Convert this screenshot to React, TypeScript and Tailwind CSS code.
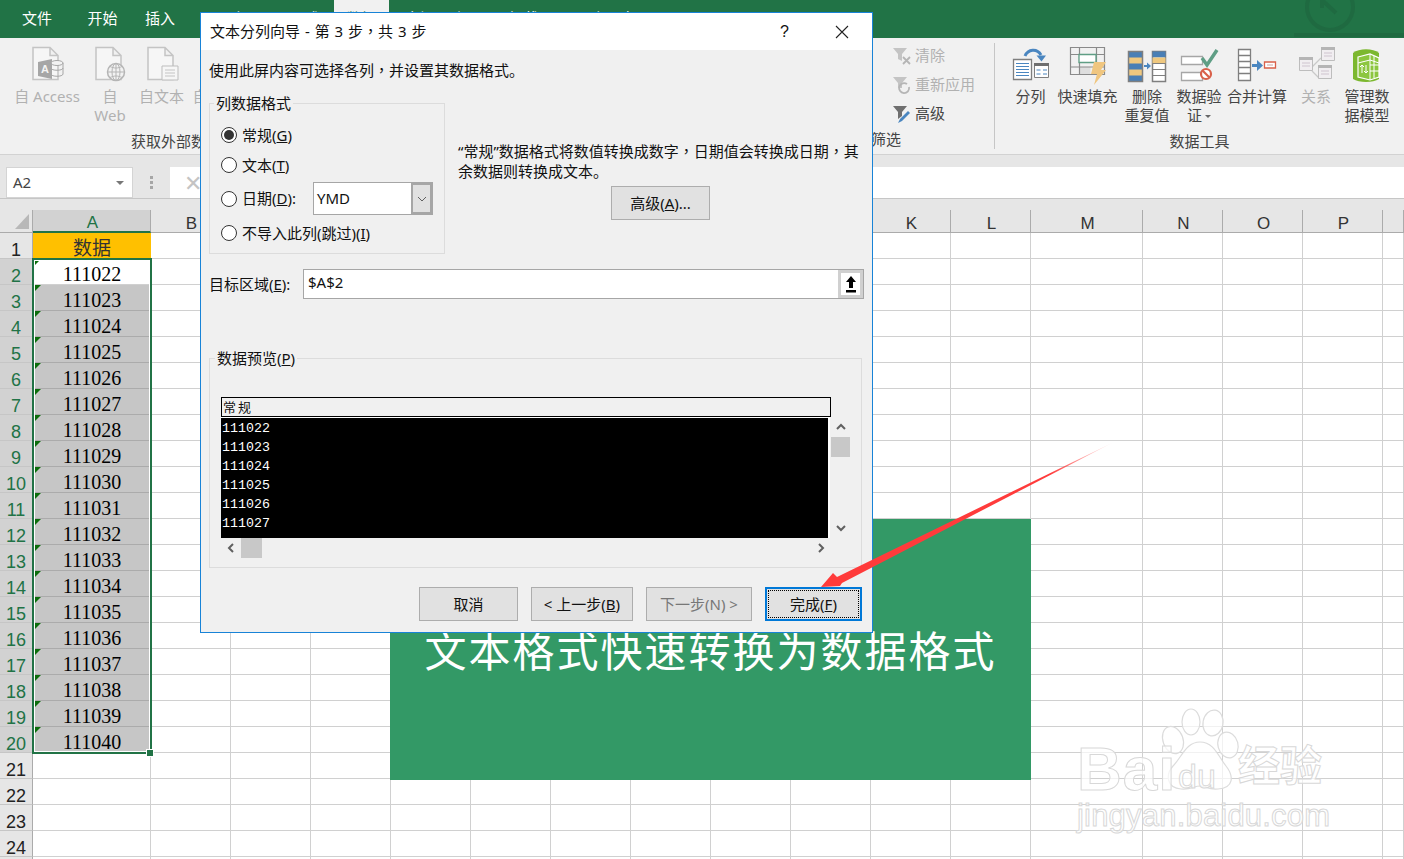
import type { ReactNode } from "react";

const columns = ["A", "B", "C", "D", "E", "F", "G", "H", "I", "J", "K", "L", "M", "N", "O", "P", ""];
const rows = Array.from({ length: 25 }, (_, i) => i + 1);
const tabs = [
  { label: "文件", w: "w-[74px]" },
  { label: "开始", w: "w-[57px]" },
  { label: "插入", w: "w-[58px]" },
  { label: "页面布局", w: "w-[86px]" },
  { label: "公式", w: "w-[59px]" },
  { label: "数据", w: "w-[55px]", active: true },
  { label: "审阅", w: "w-[62px]" },
  { label: "视图", w: "w-[40px]" },
  { label: "加载项", w: "w-[80px]" },
  { label: "百度网盘", w: "w-[69px]" },
];
const previewRows = ["111022", "111023", "111024", "111025", "111026", "111027"];

const Svg = ({ children }: { children: ReactNode }) => (
  <svg width="40" height="40" viewBox="0 0 40 40" fill="none" className="shrink-0">
    {children}
  </svg>
);

const PageShape = () => <path d="M6 2.500h17l8 8v24H6z M23 2.500v8h8" stroke="#c4c4c4" strokeWidth="1.500" fill="#f6f6f6" />;

const AccessIcon = () => (
  <Svg>
    <PageShape />
    <path d="M11 17l14-3v20l-14-3z" fill="#a6a6a6" />
    <text x="14" y="28" fontSize="11" fontWeight="700" fill="#f4f4f4" fontFamily="Liberation Sans">A</text>
    <ellipse cx="30" cy="18" rx="6" ry="2.500" fill="#f2f2f2" stroke="#a6a6a6" />
    <path d="M24 18v11c0 3 12 3 12 0V18M24 23c0 3 12 3 12 0" fill="none" stroke="#a6a6a6" />
  </Svg>
);
const WebIcon = () => (
  <Svg>
    <PageShape />
    <circle cx="26" cy="27" r="8.500" fill="#f2f2f2" stroke="#b5b5b5" strokeWidth="1.500" />
    <path d="M17.500 27h17M26 18.500v17M20 21.500c4 2 8 2 12 0M20 32.500c4-2 8-2 12 0" stroke="#b5b5b5" />
    <ellipse cx="26" cy="27" rx="4" ry="8.500" stroke="#b5b5b5" />
  </Svg>
);
const TextIcon = () => (
  <Svg>
    <PageShape />
    <path d="M20 21h16v14H20z" fill="#f6f6f6" stroke="#bdbdbd" />
    <path d="M23 25h10M23 28h10M23 31h10" stroke="#c4c4c4" />
  </Svg>
);
const SplitIcon = () => (
  <Svg>
    <path d="M2.500 14.500h18v20h-18z" fill="#fff" stroke="#7f7f7f" strokeWidth="1.300" />
    <path d="M5 18.500h13M5 21.500h13M5 24.500h13M5 27.500h13M5 30.500h13" stroke="#4a86c0" />
    <path d="M23.500 18.500h14v14h-14z" fill="#fff" stroke="#7f7f7f" />
    <path d="M23 18h15v3H23z" fill="#6f6f6f" />
    <path d="M25.500 25h4M32 25h4M25.500 29h4M32 29h4" stroke="#4a86c0" />
    <path d="M14 11c3-7 12-8 16-1" stroke="#4a86c0" strokeWidth="3" />
    <path d="M25.500 10.500h9.500l-4.500 6z" fill="#4a86c0" />
  </Svg>
);
const FlashFillIcon = () => (
  <Svg>
    <path d="M11.500 22h11v7h-11z" fill="#dedede" />
    <path d="M2.500 2.500h34v27h-34zM2.500 9.500h34M2.500 22h34M11.500 2.500v27M28.500 2.500v27" stroke="#8a8a8a" strokeWidth="1.200" fill="none" />
    <path d="M11 9.500h17v8H11z" fill="#fff" stroke="#5f9e85" strokeWidth="1.300" />
    <path d="M26 17h12l-5 8h5L26 40l3-11h-6z" fill="#f0c67f" />
  </Svg>
);
const DuplicatesIcon = () => (
  <Svg>
    <path d="M1.500 6.500h14v30h-14z" fill="#4a7fb5" />
    <path d="M1.500 12.500h14v6h-14zM1.500 24.500h14v6h-14z" fill="#efc87f" />
    <path d="M1.500 6.500h14v30h-14z" stroke="#7f7f7f" strokeWidth="1.500" />
    <path d="M17 21h4" stroke="#4a86c0" strokeWidth="2" />
    <path d="M20 17.500l4 3.500-4 3.500z" fill="#4a86c0" />
    <path d="M25.500 6.500h13v30h-13z" fill="#fff" stroke="#7f7f7f" strokeWidth="1.500" />
    <path d="M25.500 6.500h13v6h-13z" fill="#4a7fb5" />
    <path d="M25.500 12.500h13v6h-13z" fill="#efc87f" />
    <path d="M25.500 18.500h13M25.500 24.500h13M25.500 30.500h13" stroke="#7f7f7f" />
  </Svg>
);
const ValidationIcon = () => (
  <Svg>
    <path d="M2.500 11.500h21v8h-21zM2.500 27.500h21v8h-21z" fill="#fff" stroke="#a6a6a6" strokeWidth="1.300" />
    <path d="M23 13l5 7L38 5" stroke="#5f9e85" strokeWidth="3.500" />
    <circle cx="27" cy="29" r="5" fill="#fff" stroke="#d9604a" strokeWidth="2.200" />
    <path d="M23.500 25.500l7 7" stroke="#d9604a" strokeWidth="2.200" />
  </Svg>
);
const ConsolidateIcon = () => (
  <Svg>
    <path d="M1.500 4.500h12v31h-12zM1.500 10.500h12M1.500 16.500h12M1.500 22.500h12M1.500 28.500h12" fill="#fff" stroke="#7f7f7f" strokeWidth="1.300" />
    <path d="M15 20.500h7" stroke="#4a86c0" strokeWidth="3" />
    <path d="M20 15l6 5.500-6 5.500z" fill="#4a86c0" />
    <path d="M27.500 17h11v6h-11z" fill="#fff" stroke="#d9604a" strokeWidth="1.300" />
    <path d="M30 20h6" stroke="#c8a0a0" />
  </Svg>
);
const RelationshipIcon = () => (
  <Svg>
    <path d="M16 22l9-9M16 26l7 7" stroke="#c9c9c9" strokeWidth="1.300" />
    <path d="M3.500 12.500h13v13h-13zM25.500 2.500h13v13h-13zM22.500 20.500h13v13h-13z" fill="#f1eef1" stroke="#bdbdbd" />
    <path d="M3 12h14v3H3zM25 2h14v3H25zM22 20h14v3H22z" fill="#b5b5b5" />
    <path d="M6 18h8M6 21h8M28 8h8M28 11h8M25 26h8M25 29h8" stroke="#cfc4cf" />
  </Svg>
);
const DataModelIcon = () => (
  <Svg>
    <path d="M6 8c6-5 20-5 26 0v26c-6 4-20 4-26 0z" fill="#7cb82f" />
    <path d="M11 12l12-3 9 4v19l-9 3-12-3z" fill="#8cc63f" stroke="#fff" strokeWidth="1.200" />
    <path d="M23 9v26M11 18l12-3 9 3M27 11v22M32 20h-9M32 26h-9" stroke="#fff" />
    <path d="M15 28v-8M15 20l-2 2M15 20l2 2M19 20v8M19 28l-2-2M19 28l2-2" stroke="#fff" />
  </Svg>
);

const RibbonButton = ({ icon, lines, w, disabled, caret }: { icon: ReactNode; lines: string[]; w: string; disabled?: boolean; caret?: boolean }) => (
  <div className={`${w} flex shrink-0 flex-col items-center pt-[7px]`}>
    {icon}
    <div className={`mt-[2px] whitespace-nowrap text-center text-[15px] leading-[19px] ${disabled ? "text-[#b1b1b1]" : "text-[#444444]"}`}>
      {lines.map((l, i) => (
        <div key={i}>
          {l}
          {caret && i === lines.length - 1 && <span className="ml-[3px] inline-block border-x-[3px] border-t-[3px] border-x-transparent border-t-[#666666] align-middle" />}
        </div>
      ))}
    </div>
  </div>
);

const GroupLabel = ({ children, className = "" }: { children: ReactNode; className?: string }) => (
  <div className={`flex h-[24px] items-center pb-[2px] text-[15px] text-[#444444] ${className}`}>{children}</div>
);

const FilterRow = ({ icon, label, disabled }: { icon: ReactNode; label: string; disabled?: boolean }) => (
  <div className={`flex h-[29px] items-center gap-[3px] text-[15px] ${disabled ? "text-[#b1b1b1]" : "text-[#444444]"}`}>
    <svg width="20" height="22" viewBox="0 0 20 22" fill="none">
      {icon}
    </svg>
    {label}
  </div>
);

const Ribbon = () => (
  <div className="flex h-[116px] bg-[#f1f1f1]">
    <div className="flex w-[352px] shrink-0 flex-col">
      <div className="flex h-[92px] pl-[7px]">
        <RibbonButton icon={<AccessIcon />} lines={["自 Access"]} w="w-[80px]" disabled />
        <RibbonButton icon={<WebIcon />} lines={["自", "Web"]} w="w-[46px]" disabled />
        <RibbonButton icon={<TextIcon />} lines={["自文本"]} w="w-[57px]" disabled />
        <RibbonButton icon={<TextIcon />} lines={["自其他来源"]} w="w-[80px]" disabled />
      </div>
      <GroupLabel className="justify-center">获取外部数据</GroupLabel>
    </div>
    <div className="my-[5px] flex w-[643px] shrink-0 flex-col border-r border-[#c6c6c6]">
      <div className="flex h-[87px] justify-end">
        <div className="-mt-[2px] flex w-[102px] flex-col">
          <FilterRow
            disabled
            label="清除"
            icon={
              <>
                <path d="M1 3h14l-5 6v7l-4-2V9z" fill="#c4c4c4" />
                <path d="M11 12l7 7M18 12l-7 7" stroke="#b5b5b5" strokeWidth="1.800" />
              </>
            }
          />
          <FilterRow
            disabled
            label="重新应用"
            icon={
              <>
                <path d="M1 3h14l-5 6v5H6V9z" fill="#c4c4c4" />
                <path d="M17 13a5 5 0 1 1-2-3" stroke="#b5b5b5" strokeWidth="1.800" />
              </>
            }
          />
          <FilterRow
            label="高级"
            icon={
              <>
                <path d="M1 3h14l-5 6v4l-4 3V9z" fill="#6f6f6f" />
                <path d="M6 20l2-4 8-8 2 2-8 8z" fill="#4a86c0" />
              </>
            }
          />
        </div>
      </div>
      <GroupLabel className="justify-end pr-[93px]">排序和筛选</GroupLabel>
    </div>
    <div className="flex flex-1 flex-col">
      <div className="flex h-[92px] pl-[12px]">
        <RibbonButton icon={<SplitIcon />} lines={["分列"]} w="w-[47px]" />
        <RibbonButton icon={<FlashFillIcon />} lines={["快速填充"]} w="w-[67px]" />
        <RibbonButton icon={<DuplicatesIcon />} lines={["删除", "重复值"]} w="w-[52px]" />
        <RibbonButton icon={<ValidationIcon />} lines={["数据验", "证"]} w="w-[52px]" caret />
        <RibbonButton icon={<ConsolidateIcon />} lines={["合并计算"]} w="w-[64px]" />
        <RibbonButton icon={<RelationshipIcon />} lines={["关系"]} w="w-[54px]" disabled />
        <RibbonButton icon={<DataModelIcon />} lines={["管理数", "据模型"]} w="w-[48px]" />
      </div>
      <GroupLabel className="justify-center">数据工具</GroupLabel>
    </div>
  </div>
);

const FormulaBar = () => (
  <div className="flex h-[56px] flex-col border-t border-[#d2d2d2] bg-[#e6e6e6]">
    <div className="mt-[12px] flex h-[32px] items-stretch border-b border-[#c6c6c6]">
      <div className="ml-[6px] flex w-[127px] items-center justify-between border border-[#d4d4d4] bg-white pl-[6px] pr-[8px] text-[15px] text-[#444444]">
        A2
        <span className="border-x-[4px] border-t-[4px] border-x-transparent border-t-[#777777]" />
      </div>
      <div className="flex w-[37px] flex-col items-center justify-center gap-[2px]">
        <span className="size-[3px] bg-[#a6a6a6]" />
        <span className="size-[3px] bg-[#a6a6a6]" />
        <span className="size-[3px] bg-[#a6a6a6]" />
      </div>
      <div className="flex flex-1 items-center bg-white pl-[14px] text-[22px] text-[#c4c4c4]">✕</div>
    </div>
  </div>
);

const Sheet = () => (
  <div className="relative grid grid-cols-[33px_118px_repeat(11,80px)_112px_repeat(3,80px)_1fr] grid-rows-[23px_repeat(25,26px)] bg-white font-['Liberation_Serif','Noto_Sans_CJK_SC',serif] text-[20px] text-black">
    <div className="flex items-center justify-end border-r border-b border-[#ababab] bg-[#e6e6e6] pr-[3px]">
      <svg width="14" height="15" viewBox="0 0 14 15">
        <path d="M14 0v15H0z" fill="#b8b8b8" />
      </svg>
    </div>
    {columns.map((c) => (
      <div
        key={c || "end"}
        className={
          c === "A"
            ? "flex items-center justify-center border-b-2 border-r border-b-[#217346] border-r-[#ababab] bg-[#d2d2d2] pl-[2px] pt-[5px] font-['Liberation_Sans'] text-[17px] text-[#217346]"
            : "flex items-center justify-center border-r border-b border-[#ababab] bg-[#e6e6e6] pl-[2px] pt-[6px] font-['Liberation_Sans'] text-[17px] text-[#333333]"
        }
      >
        {c}
      </div>
    ))}
    {rows.map((r) => {
      const selected = r >= 2 && r <= 20;
      return [
        <div
          key={`h${r}`}
          className={`flex items-center justify-center border-r border-b border-r-[#ababab] border-b-[#c6c6c6] pt-[10px] font-['Liberation_Sans'] text-[18px] ${
            selected ? "bg-[#d2d2d2] text-[#217346]" : "bg-[#e6e6e6] text-[#222222]"
          }`}
        >
          {r <= 24 ? r : ""}
        </div>,
        ...columns.map((c) => {
          if (c === "A" && r === 1)
            return (
              <div key={`${c}${r}`} className="flex items-center justify-center bg-[#ffc000] pt-[3px] font-['Noto_Sans_CJK_SC'] text-[19px] text-[#333333]">
                数据
              </div>
            );
          if (c === "A" && selected)
            return (
              <div
                key={`${c}${r}`}
                className={`relative flex items-center justify-center border-b pt-[4px] ${r === 2 ? "border-[#d0d0d0] bg-white" : "border-[#ababab] bg-[#c6c6c6]"}`}
              >
                <span className="absolute left-[2px] top-0 size-[6px] bg-[#0b6e0b] [clip-path:polygon(0_0,100%_0,0_100%)]" />
                {111020 + r}
              </div>
            );
          return <div key={`${c}${r}`} className="border-r border-b border-[#d0d0d0]" />;
        }),
      ];
    })}
    {/* selection border A2:A20 */}
    <div className="absolute left-[32px] top-[48px] h-[496px] w-[120px] border-2 border-[#217346] shadow-[inset_0_0_0_1px_white]" />
    <div className="absolute left-[147px] top-[540px] size-[6px] bg-[#217346] outline outline-1 outline-white" />
  </div>
);

const Radio = ({ checked }: { checked?: boolean }) => (
  <span className="flex size-[16px] shrink-0 items-center justify-center rounded-full border border-[#333333] bg-white">
    {checked && <span className="size-[10px] rounded-full bg-[#333333]" />}
  </span>
);

const RadioRow = ({ checked, className, children }: { checked?: boolean; className: string; children: ReactNode }) => (
  <div className={`flex items-center gap-[5px] ${className}`}>
    <Radio checked={checked} />
    {children}
  </div>
);

const Button = ({ className, children }: { className: string; children: ReactNode }) => (
  <div className={`flex h-[34px] items-center justify-center border border-[#adadad] bg-[#e1e1e1] ${className}`}>{children}</div>
);

const Chevron = ({ d }: { d: string }) => (
  <svg width="12" height="12" viewBox="0 0 12 12" fill="none">
    <path d={d} stroke="#606060" strokeWidth="2" />
  </svg>
);

const Comma = () => <span className="font-['Noto_Sans_CJK_TC']">，</span>;

const Dialog = () => (
  <div className="absolute left-[200px] top-[12px] flex h-[621px] w-[673px] flex-col border border-[#1883d7] bg-[#f0f0f0] text-[15px] text-[#111111]">
    <div className="flex h-[37px] shrink-0 items-center bg-white pl-[9px]">
      <span className="flex-1 [word-spacing:1px]">
        文本分列向导 - 第 3 步<Comma />共 3 步
      </span>
      <span className="mr-[46px] font-['Liberation_Sans'] text-[16px]">?</span>
      <svg width="14" height="14" viewBox="0 0 14 14" className="mr-[23px]">
        <path d="M1 1l12 12M13 1L1 13" stroke="#222222" strokeWidth="1.100" />
      </svg>
    </div>
    <div className="px-[8px]">
      <div className="mt-[9px] h-[22px] leading-[22px]">
        使用此屏内容可选择各列<Comma />并设置其数据格式。
      </div>
      <div className="mt-[22px] flex">
        <div className="relative h-[151px] w-[236px] shrink-0 border border-[#dcdcdc] pl-[11px] pt-[16px]">
          <span className="absolute left-[4px] top-[-11px] bg-[#f0f0f0] px-[2px] leading-[20px]">列数据格式</span>
          <RadioRow checked className="h-[30px]">
            <span>
              常规(<u>G</u>)
            </span>
          </RadioRow>
          <RadioRow className="h-[30px]">
            <span>
              文本(<u>T</u>)
            </span>
          </RadioRow>
          <RadioRow className="mt-[2px] h-[33px]">
            <span className="w-[66px] whitespace-nowrap">
              日期(<u>D</u>):
            </span>
            <div className="flex h-[33px] w-[120px] border border-[#a6a6a6] bg-white">
              <span className="flex flex-1 items-center pl-[3px]">YMD</span>
              <span className="flex w-[21px] items-center justify-center border-[2px] border-[#a6a6a6] bg-[#e1e1e1]">
                <svg width="10" height="6" viewBox="0 0 10 6" fill="none">
                  <path d="M1 1l4 4 4-4" stroke="#606060" />
                </svg>
              </span>
            </div>
          </RadioRow>
          <RadioRow className="mt-[1px] h-[34px]">
            <span>
              不导入此列(跳过)(<u>I</u>)
            </span>
          </RadioRow>
        </div>
        <div className="ml-[13px] flex flex-col pt-[38px]">
          <p className="w-[404px] whitespace-nowrap leading-[20px]">
            “常规”数据格式将数值转换成数字<Comma />日期值会转换成日期<Comma />其
            <br />
            余数据则转换成文本。
          </p>
          <Button className="ml-[153px] mt-[5px] w-[99px]">
            <span>
              高级(<u>A</u>)...
            </span>
          </Button>
        </div>
      </div>
      <div className="mt-[15px] flex items-center">
        <span className="w-[94px] shrink-0 whitespace-nowrap">
          目标区域(<u>E</u>):
        </span>
        <div className="flex h-[30px] flex-1 border border-[#a6a6a6] bg-white">
          <span className="flex-1 pl-[4px] leading-[25px]">$A$2</span>
          <span className="flex w-[25px] items-center justify-center border-[3px] border-[#d0d0d0] bg-white">
            <svg width="12" height="18" viewBox="0 0 12 18">
              <path d="M6 1l5 6H8v6H4V7H1zM1 15h10v2.500H1z" fill="#000000" />
            </svg>
          </span>
        </div>
      </div>
      <div className="relative mt-[59px] h-[210px] w-[653px] border border-[#dcdcdc] px-[11px] pt-[38px]">
        <span className="absolute left-[5px] top-[-11px] bg-[#f0f0f0] px-[2px] leading-[20px]">
          数据预览(<u>P</u>)
        </span>
        <div className="flex h-[20px] w-[610px] items-center border border-black bg-[#f0f0f0] pl-[1px] font-['Noto_Sans_CJK_SC'] text-[13px] tracking-[2px]">常规</div>
        <div className="flex">
          <div className="flex h-[121px] w-[610px] flex-col border-r-2 border-t border-white bg-black pt-[1px] font-['Liberation_Mono'] text-[13.300px] leading-[19px] text-white">
            {previewRows.map((p) => (
              <div key={p} className="pl-[1px]">
                {p}
              </div>
            ))}
          </div>
          <div className="ml-[1px] flex h-[121px] w-[19px] flex-col items-center">
            <span className="flex h-[20px] items-center">
              <Chevron d="M2 8l4-4 4 4" />
            </span>
            <span className="h-[20px] w-full bg-[#c8c8c8]" />
            <span className="mt-auto flex h-[20px] items-center">
              <Chevron d="M2 4l4 4 4-4" />
            </span>
          </div>
        </div>
        <div className="flex h-[20px] w-[610px] items-center">
          <span className="flex w-[20px] justify-center">
            <Chevron d="M8 2L4 6l4 4" />
          </span>
          <span className="h-[20px] w-[21px] bg-[#c8c8c8]" />
          <span className="ml-auto flex w-[20px] justify-center">
            <Chevron d="M4 2l4 4-4 4" />
          </span>
        </div>
      </div>
      <div className="mt-[19px] flex pl-[210px]">
        <Button className="w-[99px]">取消</Button>
        <Button className="ml-[13px] w-[102px]">
          <span>
            &lt; 上一步(<u>B</u>)
          </span>
        </Button>
        <Button className="ml-[13px] w-[106px] text-[#777777]">下一步(N) &gt;</Button>
        <div className="ml-[13px] flex h-[34px] w-[97px] border-2 border-[#0078d7] bg-[#e1e1e1] p-[1px]">
          <span className="flex flex-1 items-center justify-center border border-dotted border-black">
            <span>
              完成(<u>F</u>)
            </span>
          </span>
        </div>
      </div>
    </div>
  </div>
);

const Watermark = () => (
  <div className="absolute left-[1070px] top-[700px] h-[140px] w-[270px] font-['Liberation_Sans','Noto_Sans_CJK_SC',sans-serif] text-white/70 [-webkit-text-stroke:1px_#d8d8d8]">
    <svg width="270" height="100" viewBox="1070 700 270 100" fill="rgba(255,255,255,0.7)" stroke="#dcdcdc" strokeWidth="1.200" className="absolute left-0 top-0">
      <ellipse cx="1173" cy="740" rx="10" ry="14" transform="rotate(-20 1173 740)" />
      <ellipse cx="1191" cy="722" rx="9" ry="13" />
      <ellipse cx="1213" cy="723" rx="10" ry="13" transform="rotate(10 1213 723)" />
      <ellipse cx="1228" cy="745" rx="10" ry="13" transform="rotate(-15 1228 745)" />
      <path d="M1200 742c14 0 18 14 26 24 8 10 8 22-8 23-10 1-12-3-18-3s-9 4-19 3c-14-1-16-14-8-23 9-9 13-24 27-24z" />
    </svg>
    <span className="absolute left-[7px] top-[39px] text-[62px] font-bold leading-[60px] tracking-[1px]">Bai</span>
    <span className="absolute left-[108px] top-[59px] text-[34px] leading-[34px]">du</span>
    <span className="absolute left-[168px] top-[42px] text-[42px] font-bold leading-[50px]">经验</span>
    <span className="absolute left-[7px] top-[98px] whitespace-nowrap text-[31px] leading-[36px] tracking-[0.200px]">jingyan.baidu.com</span>
  </div>
);

export default function App() {
  return (
    <div className="relative h-[859px] w-[1404px] overflow-hidden bg-white font-['Noto_Sans','Noto_Sans_CJK_SC',sans-serif]">
      {/* title bar and tabs */}
      <div className="relative flex h-[38px] bg-[#217346] pb-[2px] text-[15px] text-white">
        {tabs.map((t) => (
          <div key={t.label} className={`${t.w} -mb-[2px] flex items-center justify-center pb-[2px] ${t.active ? "bg-[#f1f1f1] text-[#217346]" : ""}`}>
            {t.label}
          </div>
        ))}
        <svg width="110" height="38" viewBox="1294 0 110 38" fill="none" stroke="#1f6a41" strokeWidth="4" className="absolute left-[1294px] top-0">
          <circle cx="1330" cy="7" r="23" />
          <path d="M1322 0l14 13M1322 0v8" />
          <path d="M1294 35h110" />
        </svg>
      </div>
      <Ribbon />
      <FormulaBar />
      <Sheet />

      {/* green title box */}
      <div className="absolute left-[390px] top-[519px] flex h-[261px] w-[641px] items-center justify-center bg-[#339966] pt-[2px] text-[42px] tracking-[2px] text-white">
        文本格式快速转换为数据格式
      </div>
      <Watermark />
      <Dialog />

      {/* red arrow */}
      <svg width="320" height="160" viewBox="810 440 320 160" className="absolute left-[810px] top-[440px]">
        <defs>
          <linearGradient id="tail" x1="1114" y1="442" x2="1050" y2="475" gradientUnits="userSpaceOnUse">
            <stop offset="0" stopColor="#ff3b3b" stopOpacity="0" />
            <stop offset="1" stopColor="#ff3b3b" />
          </linearGradient>
        </defs>
        <path d="M1114 442L842 583 840 586 821 587 833 573 837 577z" fill="url(#tail)" />
      </svg>
    </div>
  );
}
